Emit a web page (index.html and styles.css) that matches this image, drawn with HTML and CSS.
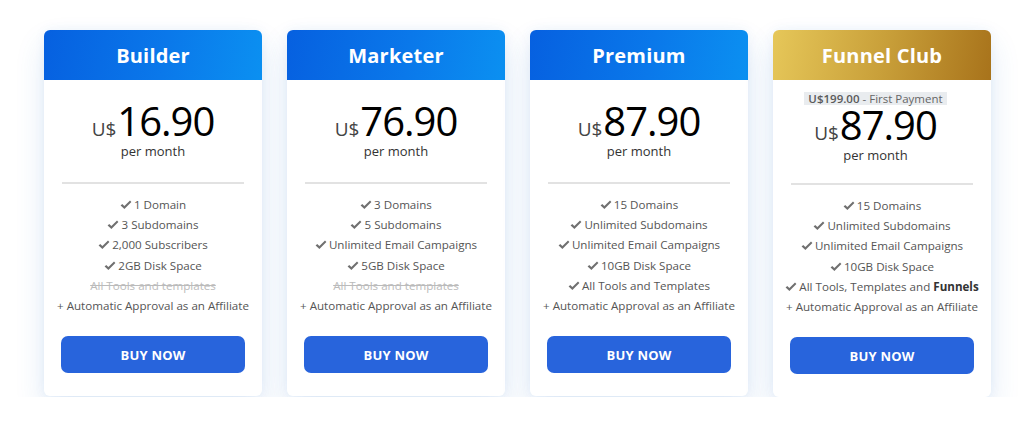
FILE: index.html
```html
<!DOCTYPE html>
<html>
<head>
<meta charset="utf-8">
<link rel="stylesheet" href="styles.css">
</head>
<body>
<div class="plans">
  <div class="card">
    <div class="head blue">Builder</div>
    <div class="body">
      <div class="price"><span class="cur">U$</span><span class="amt">16.90</span></div>
      <div class="per">per month</div>
      <hr class="div">
      <ul class="feat">
        <li><svg class="ck" viewBox="0 0 12 10"><path d="M0.6 5.4 L2.2 3.9 L4.4 6 L10 0.6 L11.4 2 L4.4 8.9 Z"/></svg>1 Domain</li>
        <li><svg class="ck" viewBox="0 0 12 10"><path d="M0.6 5.4 L2.2 3.9 L4.4 6 L10 0.6 L11.4 2 L4.4 8.9 Z"/></svg>3 Subdomains</li>
        <li><svg class="ck" viewBox="0 0 12 10"><path d="M0.6 5.4 L2.2 3.9 L4.4 6 L10 0.6 L11.4 2 L4.4 8.9 Z"/></svg>2,000 Subscribers</li>
        <li><svg class="ck" viewBox="0 0 12 10"><path d="M0.6 5.4 L2.2 3.9 L4.4 6 L10 0.6 L11.4 2 L4.4 8.9 Z"/></svg>2GB Disk Space</li>
        <li class="off">All Tools and templates</li>
        <li>+ Automatic Approval as an Affiliate</li>
      </ul>
      <a class="btn">BUY NOW</a>
    </div>
  </div>
  <div class="card">
    <div class="head blue">Marketer</div>
    <div class="body">
      <div class="price"><span class="cur">U$</span><span class="amt">76.90</span></div>
      <div class="per">per month</div>
      <hr class="div">
      <ul class="feat">
        <li><svg class="ck" viewBox="0 0 12 10"><path d="M0.6 5.4 L2.2 3.9 L4.4 6 L10 0.6 L11.4 2 L4.4 8.9 Z"/></svg>3 Domains</li>
        <li><svg class="ck" viewBox="0 0 12 10"><path d="M0.6 5.4 L2.2 3.9 L4.4 6 L10 0.6 L11.4 2 L4.4 8.9 Z"/></svg>5 Subdomains</li>
        <li><svg class="ck" viewBox="0 0 12 10"><path d="M0.6 5.4 L2.2 3.9 L4.4 6 L10 0.6 L11.4 2 L4.4 8.9 Z"/></svg>Unlimited Email Campaigns</li>
        <li><svg class="ck" viewBox="0 0 12 10"><path d="M0.6 5.4 L2.2 3.9 L4.4 6 L10 0.6 L11.4 2 L4.4 8.9 Z"/></svg>5GB Disk Space</li>
        <li class="off">All Tools and templates</li>
        <li>+ Automatic Approval as an Affiliate</li>
      </ul>
      <a class="btn">BUY NOW</a>
    </div>
  </div>
  <div class="card">
    <div class="head blue">Premium</div>
    <div class="body">
      <div class="price"><span class="cur">U$</span><span class="amt">87.90</span></div>
      <div class="per">per month</div>
      <hr class="div">
      <ul class="feat">
        <li><svg class="ck" viewBox="0 0 12 10"><path d="M0.6 5.4 L2.2 3.9 L4.4 6 L10 0.6 L11.4 2 L4.4 8.9 Z"/></svg>15 Domains</li>
        <li><svg class="ck" viewBox="0 0 12 10"><path d="M0.6 5.4 L2.2 3.9 L4.4 6 L10 0.6 L11.4 2 L4.4 8.9 Z"/></svg>Unlimited Subdomains</li>
        <li><svg class="ck" viewBox="0 0 12 10"><path d="M0.6 5.4 L2.2 3.9 L4.4 6 L10 0.6 L11.4 2 L4.4 8.9 Z"/></svg>Unlimited Email Campaigns</li>
        <li><svg class="ck" viewBox="0 0 12 10"><path d="M0.6 5.4 L2.2 3.9 L4.4 6 L10 0.6 L11.4 2 L4.4 8.9 Z"/></svg>10GB Disk Space</li>
        <li><svg class="ck" viewBox="0 0 12 10"><path d="M0.6 5.4 L2.2 3.9 L4.4 6 L10 0.6 L11.4 2 L4.4 8.9 Z"/></svg>All Tools and Templates</li>
        <li>+ Automatic Approval as an Affiliate</li>
      </ul>
      <a class="btn">BUY NOW</a>
    </div>
  </div>
  <div class="card">
    <div class="head gold">Funnel Club</div>
    <div class="body club">
      <div class="first"><b>U$199.00</b> - First Payment</div>
      <div class="price"><span class="cur">U$</span><span class="amt">87.90</span></div>
      <div class="per">per month</div>
      <hr class="div">
      <ul class="feat">
        <li><svg class="ck" viewBox="0 0 12 10"><path d="M0.6 5.4 L2.2 3.9 L4.4 6 L10 0.6 L11.4 2 L4.4 8.9 Z"/></svg>15 Domains</li>
        <li><svg class="ck" viewBox="0 0 12 10"><path d="M0.6 5.4 L2.2 3.9 L4.4 6 L10 0.6 L11.4 2 L4.4 8.9 Z"/></svg>Unlimited Subdomains</li>
        <li><svg class="ck" viewBox="0 0 12 10"><path d="M0.6 5.4 L2.2 3.9 L4.4 6 L10 0.6 L11.4 2 L4.4 8.9 Z"/></svg>Unlimited Email Campaigns</li>
        <li><svg class="ck" viewBox="0 0 12 10"><path d="M0.6 5.4 L2.2 3.9 L4.4 6 L10 0.6 L11.4 2 L4.4 8.9 Z"/></svg>10GB Disk Space</li>
        <li><svg class="ck" viewBox="0 0 12 10"><path d="M0.6 5.4 L2.2 3.9 L4.4 6 L10 0.6 L11.4 2 L4.4 8.9 Z"/></svg>All Tools, Templates and <b>Funnels</b></li>
        <li>+ Automatic Approval as an Affiliate</li>
      </ul>
      <a class="btn">BUY NOW</a>
    </div>
  </div>
</div>
</body>
</html>
```

FILE: styles.css
```css
* { box-sizing: border-box; }
html, body { margin: 0; padding: 0; background: #fff; }
body { font-family: "Open Sans", "Liberation Sans", sans-serif; color: #444; }

.plans {
  display: flex;
  gap: 25px;
  padding: 30px 0 0 44px;
  align-items: flex-start;
}

.card {
  width: 218px;
  background: #fff;
  border-radius: 6px;
  box-shadow: 0 14px 30px rgba(40, 110, 200, 0.14), 0 0 12px rgba(40, 110, 200, 0.06);
}

.head {
  height: 50px;
  border-radius: 6px 6px 0 0;
  display: flex;
  align-items: center;
  justify-content: center;
  color: #fff;
  font-size: 20px;
  font-weight: 700;
  letter-spacing: 0.2px;
}
.blue { background: linear-gradient(100deg, #0660e0 0%, #0a78ea 55%, #0b90f1 100%); }
.gold { background: linear-gradient(100deg, #e6c759 0%, #c9a03a 50%, #a8731b 100%); }

.body {
  padding: 21px 17px 23px;
  display: flex;
  flex-direction: column;
  align-items: center;
}
.body.club { padding-top: 12px; }

.first {
  background: #e9ecef;
  font-size: 11.5px;
  line-height: 13px;
  padding: 0 4px;
  color: #666;
  margin-bottom: 0;
}
.first b { color: #5a5a5a; font-weight: 600; }

.price {
  display: flex;
  align-items: baseline;
  color: #000;
  line-height: 40px;
  height: 40px;
}
.cur { font-size: 19px; color: #444; margin-right: 1px; }
.amt { font-size: 40px; letter-spacing: -1px; font-weight: 500; }

.per { font-size: 13px; color: #333; margin-top: 1px; }

.club .first, .club .price, .club .per { margin-right: 13px; }

.div {
  align-self: stretch;
  border: 0;
  height: 2px;
  background: #e2e2e2;
  margin: 22px 1px 11px;
}
.club .div { margin-top: 19px; }

.feat {
  list-style: none;
  margin: 0;
  padding: 0;
  text-align: center;
  font-size: 11.6px;
  line-height: 20.2px;
  color: #555;
  white-space: nowrap;
}
.feat b { color: #333; font-weight: 700; }
.feat .off { color: #bbb; text-decoration: line-through; }
.ck { width: 12px; height: 10px; fill: #707070; margin-right: 2px; vertical-align: -1px; }

.btn {
  align-self: stretch;
  margin-top: 20px;
  height: 37px;
  border-radius: 7px;
  background: #2864dc;
  color: #fff;
  font-size: 13px;
  font-weight: 700;
  display: flex;
  align-items: center;
  justify-content: center;
  letter-spacing: 0.2px;
}
```
